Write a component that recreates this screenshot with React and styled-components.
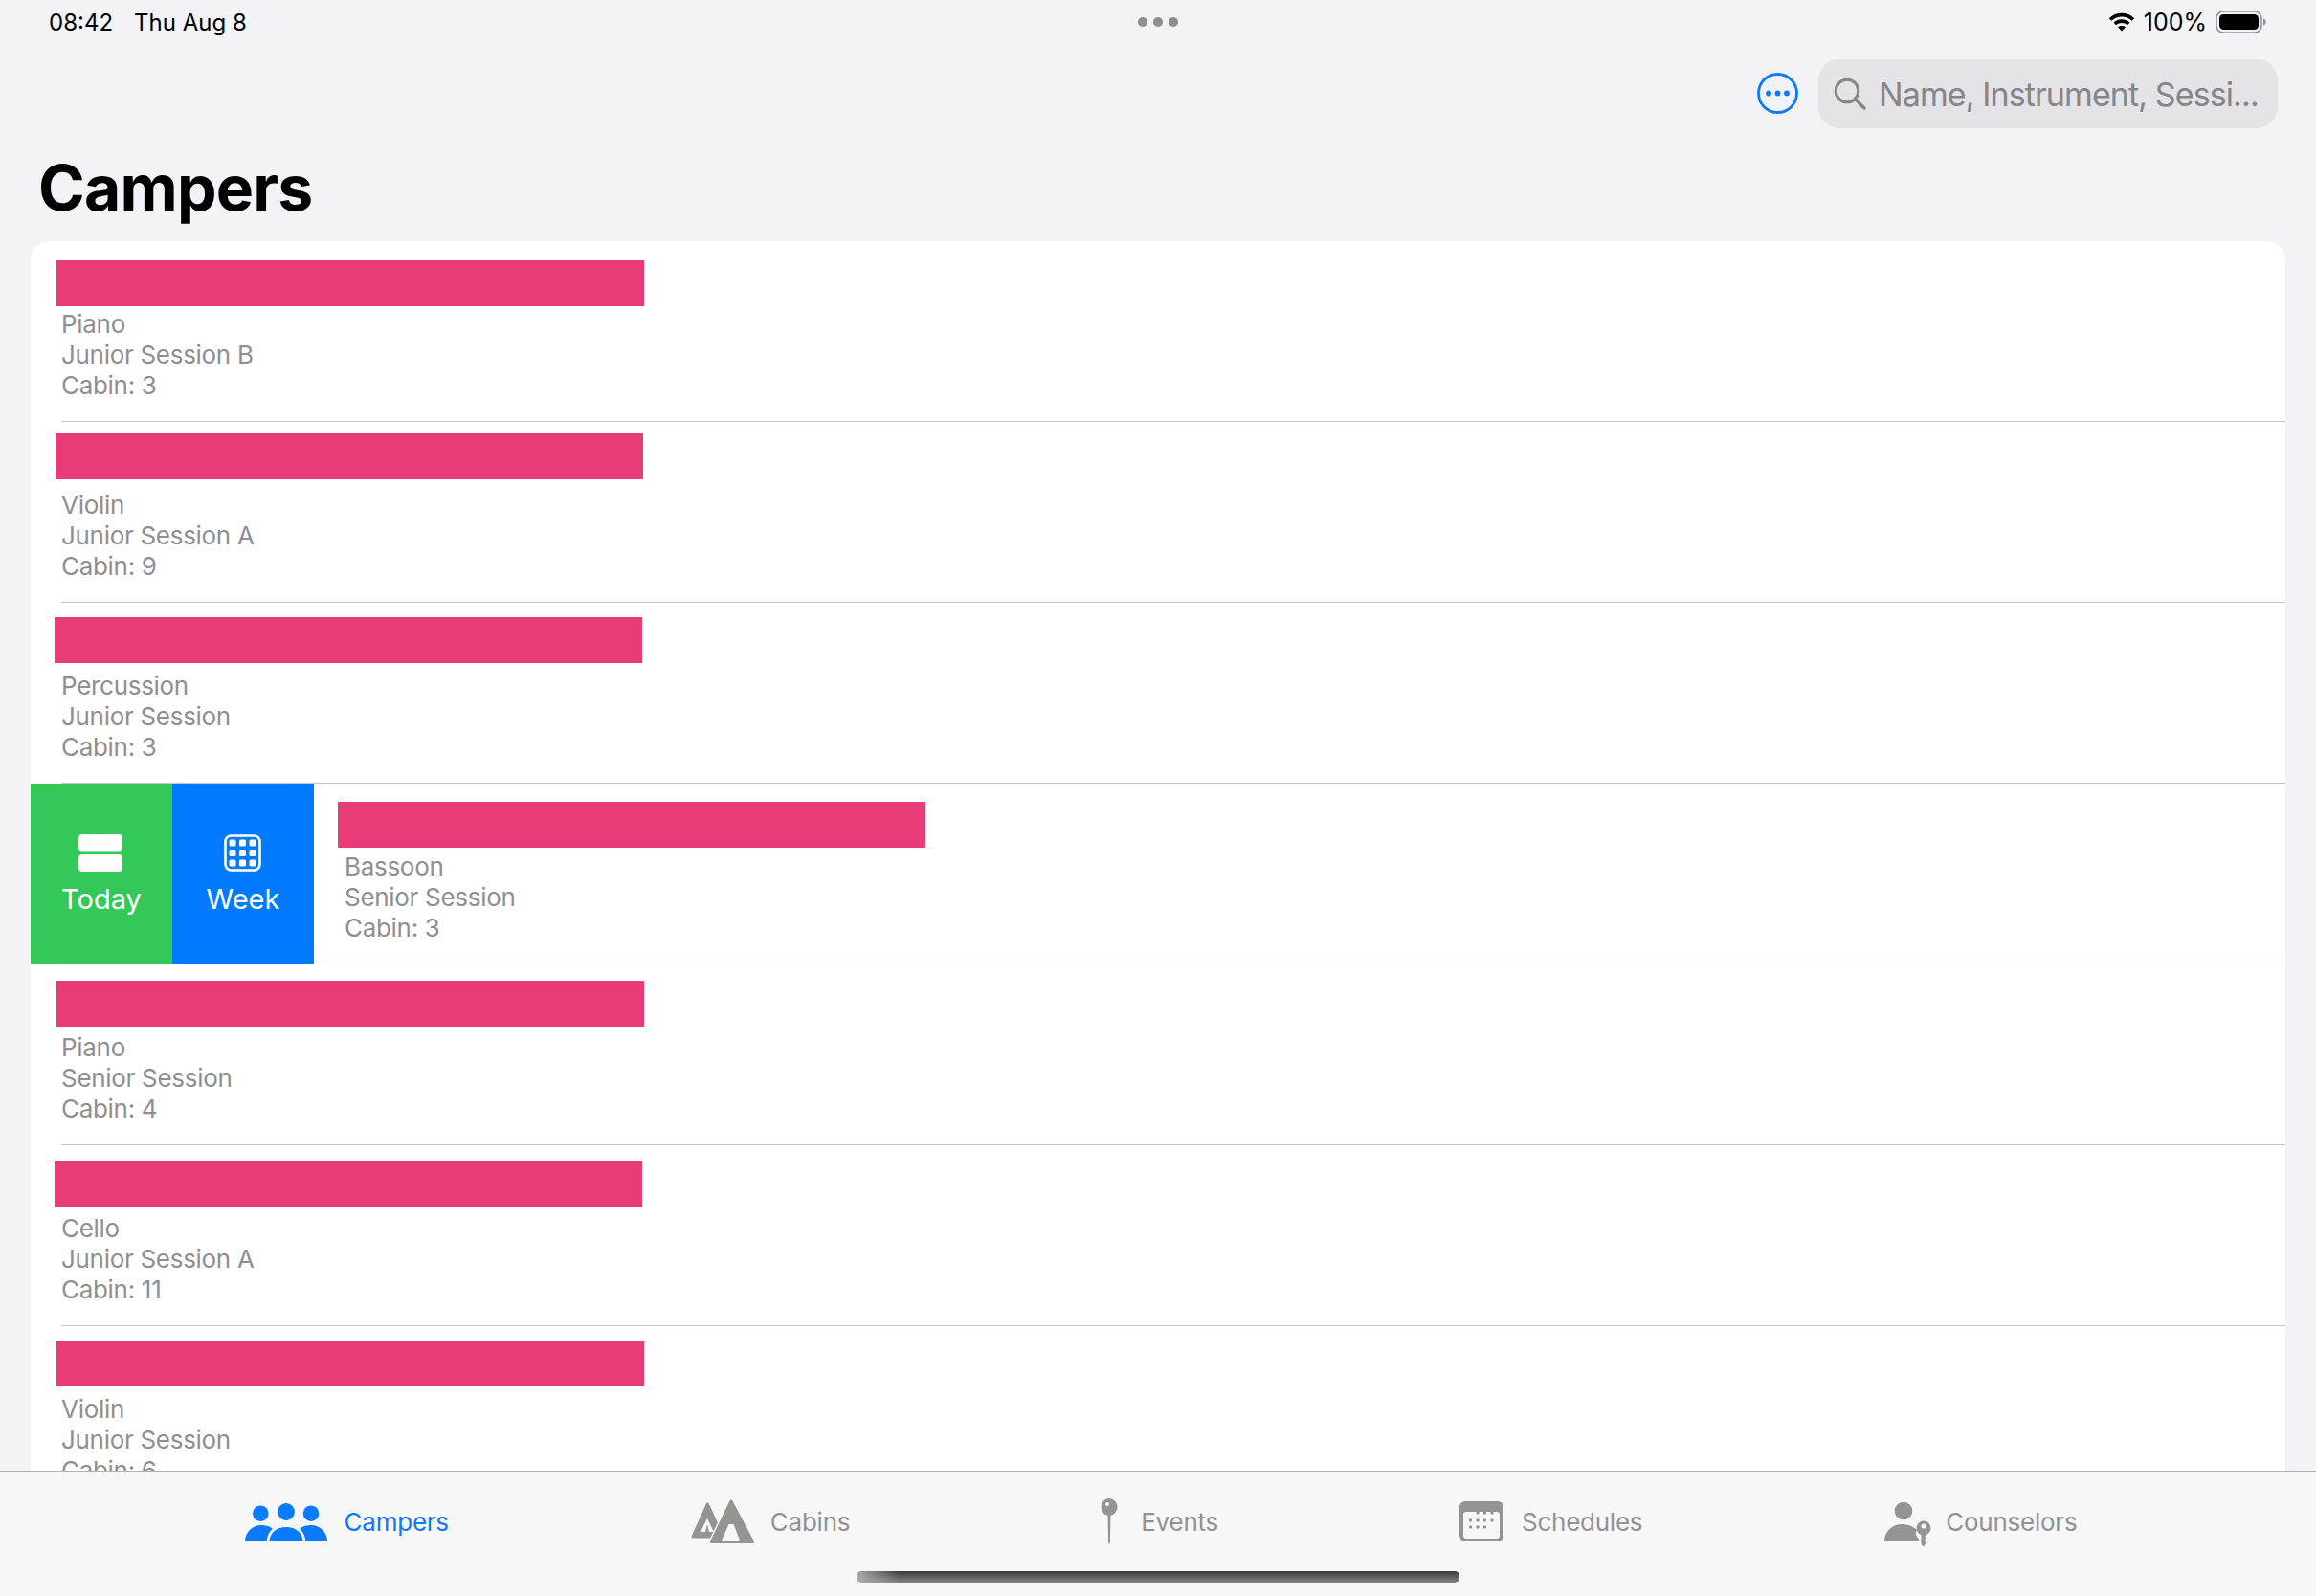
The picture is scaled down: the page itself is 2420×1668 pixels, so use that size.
import React from "react";
import styled, { createGlobalStyle } from "styled-components";

const Global = createGlobalStyle`
  html, body { margin: 0; padding: 0; background: #f2f2f7; }
  * { box-sizing: border-box; }
`;
const SANS = `Inter, "Liberation Sans", sans-serif`;

const Page = styled.div`
  position: relative;
  width: 2420px;
  height: 1668px;
  display: flex;
  flex-direction: column;
  overflow: hidden;
  background: #f2f2f7;
  font-family: ${SANS};
`;
const StatusBar = styled.div`
  height: 46px;
  flex: none;
  display: grid;
  grid-template-columns: 1fr auto 1fr;
  align-items: center;
  padding: 0 52px 0 51px;
  color: #000;
  font-size: 24px;
`;
const StatusLeft = styled.div`
  display: flex;
  gap: 22px;
`;
const StatusDots = styled.div`
  display: flex;
  gap: 6px;
`;
const StatusDot = styled.span`
  width: 10px;
  height: 10px;
  border-radius: 50%;
  background: #8d8d92;
`;
const StatusRight = styled.div`
  display: flex;
  justify-content: flex-end;
  align-items: center;
  gap: 9px;
  font-size: 25px;
`;
const Toolbar = styled.div`
  flex: none;
  height: 88px;
  padding: 16px 40px 0 0;
  display: flex;
  justify-content: flex-end;
  align-items: flex-start;
  gap: 21px;
`;
const MoreButton = styled.div`
  margin-top: 14px;
  display: flex;
`;
const Search = styled.div`
  width: 480px;
  height: 72px;
  border-radius: 22px;
  background: #e3e3e8;
  display: flex;
  align-items: center;
  padding-left: 16px;
  gap: 13px;
  color: #85858a;
  font-size: 34px;
  letter-spacing: -0.9px;
  white-space: nowrap;
  svg { flex: none; }
`;
const Title = styled.h1`
  flex: none;
  margin: 0;
  height: 118px;
  padding: 24px 0 0 40px;
  font-size: 66px;
  letter-spacing: -0.8px;
  line-height: 76px;
  font-weight: 700;
  color: #000;
`;
const List = styled.div`
  flex: 1;
  min-height: 0;
  margin: 0 32px;
  background: #fff;
  border-radius: 20px 20px 0 0;
  overflow: hidden;
`;
const Row = styled.div`
  height: 188px;
  display: flex;
`;
const Actions = styled.div`
  flex: none;
  display: flex;
`;
const Action = styled.div`
  width: 148px;
  background: ${(p) => p.$color};
  color: #fff;
  display: flex;
  flex-direction: column;
  align-items: center;
  font-size: 29px;
  line-height: 36px;
  padding-top: 53px;
`;
const ActionIcon = styled.div`
  height: 39px;
  display: flex;
  margin: 0 2px 11px 0;
`;
const RowBody = styled.div`
  padding-left: 0;
`;
const BarSlot = styled.div`
  height: 71px;
  padding-top: ${(p) => p.$top}px;
`;
const Bar = styled.div`
  width: 614px;
  height: 48px;
  margin-left: ${(p) => p.$shift}px;
  background: #e83b7a;
`;
const Detail = styled.div`
  padding-left: 32px;
  color: #8e8e93;
  font-size: 26px;
  letter-spacing: -0.3px;
  line-height: 32px;
`;
const Separator = styled.div`
  height: 1px;
  margin-left: 32px;
  background: #c6c6c8;
`;
const TabBar = styled.div`
  flex: none;
  height: 131px;
  background: #f6f7f6;
  border-top: 1px solid #b0b0b0;
  display: flex;
  justify-content: center;
  gap: 252px;
  padding: 28px 0 0 6px;
`;
const Tab = styled.div`
  display: flex;
  align-items: center;
  height: 48px;
  gap: ${(p) => p.$gap}px;
  font-size: 26px;
  letter-spacing: -0.25px;
  color: ${(p) => (p.$active ? "#0a7aff" : "#929292")};
`;
const HomeIndicator = styled.div`
  position: absolute;
  left: 895px;
  bottom: 14px;
  width: 630px;
  height: 12px;
  border-radius: 5px;
  background:
    linear-gradient(90deg, rgba(175, 175, 175, 0.95) 0, rgba(175, 175, 175, 0) 7%),
    linear-gradient(180deg, #3a3a3a 0, #858585 100%);
`;

const Wifi = () => (
  <svg width="28" height="20" viewBox="0 0 28 20" fill="none" stroke="#000" strokeWidth="3.6">
    <path d="M2 7.500C9 1 19 1 26 7.500" />
    <path d="M6.800 12C11 8.200 17 8.200 21.200 12" />
    <path d="M14 19.500l-4-4.200c2.300-1.800 5.700-1.800 8 0z" fill="#000" stroke="none" />
  </svg>
);
const Battery = () => (
  <svg width="53" height="24" viewBox="0 0 53 24">
    <rect x="1" y="1" width="47" height="22" rx="7" fill="none" stroke="#8f8f8f" strokeWidth="1.600" />
    <rect x="4" y="4" width="41" height="16" rx="4.500" fill="#000" />
    <path d="M50 8.500c2 .6 2.600 2 2.600 3.500s-.6 2.900-2.600 3.500z" fill="#8f8f8f" />
  </svg>
);
const MoreIcon = () => (
  <svg width="43" height="43" viewBox="0 0 43 43" fill="#0a7aff">
    <circle cx="21.500" cy="21.500" r="20" fill="none" stroke="#0a7aff" strokeWidth="2.800" />
    <circle cx="12" cy="21.500" r="2.900" />
    <circle cx="21.500" cy="21.500" r="2.900" />
    <circle cx="31" cy="21.500" r="2.900" />
  </svg>
);
const SearchIcon = () => (
  <svg width="34" height="34" viewBox="0 0 34 34" fill="none" stroke="#85858a" strokeWidth="3">
    <circle cx="14" cy="14" r="11.800" />
    <path d="M22.500 22.500L32 32" strokeLinecap="round" strokeWidth="3.400" />
  </svg>
);
const TodayIcon = () => (
  <svg width="46" height="39" viewBox="0 0 46 39" fill="#fff">
    <rect width="46" height="17.500" rx="4" />
    <rect y="21" width="46" height="18" rx="4" />
  </svg>
);
const WeekIcon = () => {
  const xs = [9, 19.500, 30];
  return (
    <svg width="39" height="39" viewBox="0 0 39 39" fill="#fff">
      <rect x="1.500" y="1.500" width="36" height="36" rx="6" fill="none" stroke="#fff" strokeWidth="2.600" />
      {xs.map((y) => xs.map((x) => <rect key={`${x}-${y}`} x={x - 3.500} y={y - 3.500} width="7" height="7" rx="1.500" />))}
    </svg>
  );
};
const CampersIcon = () => (
  <svg width="86" height="41" viewBox="0 0 86 41" fill="#0a7aff">
    <circle cx="16.300" cy="11.700" r="8.300" />
    <circle cx="69" cy="11.700" r="8.300" />
    <circle cx="43" cy="10" r="9" />
    <path d="M0 41C0 31 8 24 17 24c6 0 11 2 14 6v11z" />
    <path d="M86 41c0-10-8-17-17-17-6 0-11 2-14 6v11z" />
    <path d="M24 42.500C24 31 32 24.500 43 24.500S62 31 62 42.500z" stroke="#f6f7f6" strokeWidth="2.800" />
  </svg>
);
const CabinsIcon = () => (
  <svg width="68" height="48" viewBox="0 0 68 48" fill="#949592">
    <path d="M18.300 6L34 40H3z" stroke="#949592" strokeWidth="3" strokeLinejoin="round" />
    <path d="M18 21l-7 14h5l2-8 2 8h5z" fill="#f6f7f6" />
    <path d="M43 3L65.500 45.500H22.500z" stroke="#f6f7f6" strokeWidth="6" strokeLinejoin="round" />
    <path d="M43 3L65.500 45.500H22.500z" stroke="#949592" strokeWidth="3" strokeLinejoin="round" />
    <path d="M40.500 27h5l6.500 17H33z" fill="#f6f7f6" />
  </svg>
);
const PinIcon = () => (
  <svg width="38" height="48" viewBox="0 0 38 48" fill="#949592">
    <ellipse cx="19" cy="9" rx="8.500" ry="9" />
    <path d="M17.500 15h3l-.6 31.500c0 1-1.800 1-1.800 0z" />
    <circle cx="17" cy="6" r="2" fill="#f6f7f6" />
  </svg>
);
const SchedulesIcon = () => {
  const dots = [
    [19, 12], [26.500, 12], [34, 12],
    [11.500, 20], [19, 20], [26.500, 20], [34, 20],
    [11.500, 27], [19, 27], [26.500, 27],
  ];
  return (
    <svg width="46" height="42" viewBox="0 0 46 42" fill="#949592">
      <rect width="46" height="42" rx="6" />
      <rect x="4" y="11" width="38" height="28" rx="3" fill="#f6f7f6" />
      {dots.map(([x, y]) => <circle key={`${x}-${y}`} cx={x} cy={y} r="1.700" />)}
    </svg>
  );
};
const CounselorsIcon = () => (
  <svg width="50" height="48" viewBox="0 -3 50 48" fill="#949592" overflow="visible">
    <circle cx="21" cy="10" r="9.300" />
    <path d="M1 42C1 31 10 24 19 24c6 0 12 2 16 6-2 3-1 7 2 9v3z" />
    <circle cx="42" cy="28" r="7.500" />
    <path d="M39.500 33h5v2.500l-1.500 1.500 1.500 1.500-1.500 1.500 1.500 1.500v2L42 47.500l-2.500-2.500z" />
    <circle cx="42" cy="26" r="2.600" fill="#f6f7f6" />
  </svg>
);

const rows = [
  { top: 20, shift: 27, lines: ["Piano", "Junior Session B", "Cabin: 3"] },
  { top: 12, shift: 26, lines: ["Violin", "Junior Session A", "Cabin: 9"] },
  { top: 15, shift: 25, lines: ["Percussion", "Junior Session", "Cabin: 3"] },
  { top: 19, shift: 25, swiped: true, lines: ["Bassoon", "Senior Session", "Cabin: 3"] },
  { top: 17, shift: 27, lines: ["Piano", "Senior Session", "Cabin: 4"] },
  { top: 16, shift: 25, lines: ["Cello", "Junior Session A", "Cabin: 11"] },
  { top: 15, shift: 27, lines: ["Violin", "Junior Session", "Cabin: 6"] },
];

const tabs = [
  { label: "Campers", Icon: CampersIcon, gap: 18, active: true },
  { label: "Cabins", Icon: CabinsIcon, gap: 16 },
  { label: "Events", Icon: PinIcon, gap: 14 },
  { label: "Schedules", Icon: SchedulesIcon, gap: 19 },
  { label: "Counselors", Icon: CounselorsIcon, gap: 15 },
];

export default function App() {
  return (
    <Page>
      <Global />
      <StatusBar>
        <StatusLeft>
          <span>08:42</span>
          <span>Thu Aug 8</span>
        </StatusLeft>
        <StatusDots>
          <StatusDot />
          <StatusDot />
          <StatusDot />
        </StatusDots>
        <StatusRight>
          <Wifi />
          <span>100%</span>
          <Battery />
        </StatusRight>
      </StatusBar>
      <Toolbar>
        <MoreButton>
          <MoreIcon />
        </MoreButton>
        <Search>
          <SearchIcon />
          <span>Name, Instrument, Sessi...</span>
        </Search>
      </Toolbar>
      <Title>Campers</Title>
      <List>
        {rows.map((r, i) => (
          <React.Fragment key={i}>
            <Row>
              {r.swiped && (
                <Actions>
                  <Action $color="#34c85a">
                    <ActionIcon><TodayIcon /></ActionIcon>
                    Today
                  </Action>
                  <Action $color="#007aff">
                    <ActionIcon><WeekIcon /></ActionIcon>
                    Week
                  </Action>
                </Actions>
              )}
              <RowBody>
                <BarSlot $top={r.top}>
                  <Bar $shift={r.shift} />
                </BarSlot>
                <Detail>
                  {r.lines.map((l) => (
                    <div key={l}>{l}</div>
                  ))}
                </Detail>
              </RowBody>
            </Row>
            <Separator />
          </React.Fragment>
        ))}
      </List>
      <TabBar>
        {tabs.map(({ label, Icon, gap, active }) => (
          <Tab key={label} $gap={gap} $active={active}>
            <Icon />
            <span>{label}</span>
          </Tab>
        ))}
      </TabBar>
      <HomeIndicator />
    </Page>
  );
}
